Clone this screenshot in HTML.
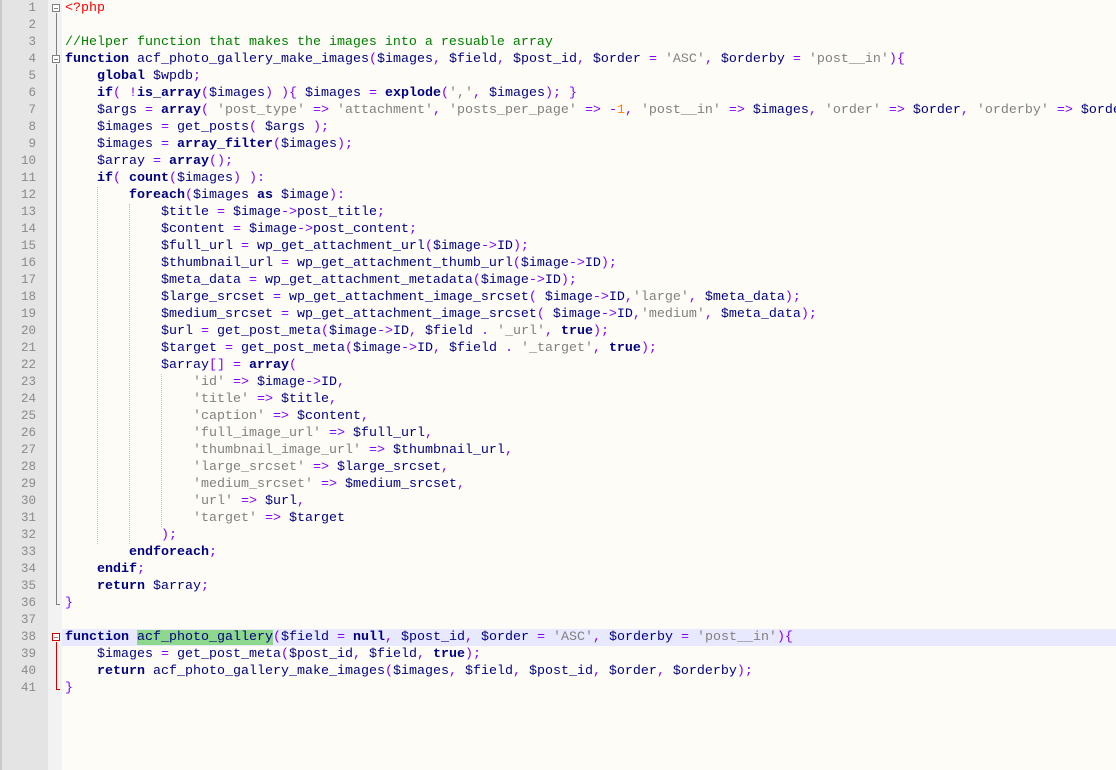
<!DOCTYPE html>
<html><head><meta charset="utf-8"><style>
html,body{margin:0;padding:0;width:1116px;height:770px;overflow:hidden;background:#fefcf6;}
#g{position:absolute;left:0;top:0;width:48px;height:770px;background:#e4e4e4;border-left:2px solid #c8c8c8;box-sizing:border-box;}
#f{position:absolute;left:48px;top:0;width:14px;height:770px;background:#f2f2f2;}
.ln{position:absolute;left:0;width:36px;text-align:right;font:12.5px "Liberation Mono",monospace;color:#8a8a8a;}
#code{position:absolute;left:65px;top:0;font:13.33px/17px "Liberation Mono",monospace;color:#000080;white-space:pre;}
.L{height:17px;}
.hl{position:absolute;left:62px;top:629px;width:1054px;height:17px;background:#e8e8ff;}
.k{font-weight:bold;color:#000080}
.s{color:#808080}
.o{color:#8000ff}
.c{color:#008000}
.h{color:#ff0000}
.m{background:#8ed88e}
.box{position:absolute;left:52px;width:8px;height:8px;border:1px solid #808080;background:#fff;box-sizing:border-box;}
.box:after{content:"";position:absolute;left:1px;top:3px;width:4px;height:1px;background:#808080;}
.vl{position:absolute;left:56px;width:1px;background:#808080;}
.ig{position:absolute;width:0;border-left:1px dotted #c0c0c0;}
</style></head><body>
<div id="g"></div><div id="f"></div>
<div class="hl"></div>
<div id="lns"></div>
<script>
var s='';for(var i=1;i<=41;i++){s+='<div class="ln" style="top:'+((i-1)*17+1)+'px">'+i+'</div>';}
document.getElementById('lns').innerHTML=s;
</script>
<div class="box" style="top:4px"></div>
<div class="vl" style="top:13px;height:47px"></div>
<div class="box" style="top:55px"></div>
<div class="vl" style="top:64px;height:541px"></div>
<div class="vl" style="top:604px;height:1px;width:4px"></div>
<div class="box" style="top:633px;border-color:#d00000"></div>
<div class="vl" style="top:642px;height:48px;background:#d00000"></div>
<div class="vl" style="top:689px;height:1px;width:4px;background:#d00000"></div>
<div class="ig" style="left:97px;top:187px;height:357px"></div>
<div class="ig" style="left:129px;top:204px;height:340px"></div>
<div class="ig" style="left:161px;top:374px;height:153px"></div>
<div id="code"><div class="L"><span class="h">&lt;?php</span></div><div class="L"> </div><div class="L"><span class="c">//Helper function that makes the images into a resuable array</span></div><div class="L"><span class="k">function</span> acf_photo_gallery_make_images<span class="o">(</span>$images<span class="o">,</span> $field<span class="o">,</span> $post_id<span class="o">,</span> $order <span class="o">=</span> <span class="s">'ASC'</span><span class="o">,</span> $orderby <span class="o">=</span> <span class="s">'post__in'</span><span class="o">){</span></div><div class="L">    <span class="k">global</span> $wpdb<span class="o">;</span></div><div class="L">    <span class="k">if</span><span class="o">(</span> <span class="o">!</span><span class="k">is_array</span><span class="o">(</span>$images<span class="o">)</span> <span class="o">){</span> $images <span class="o">=</span> <span class="k">explode</span><span class="o">(</span><span class="s">','</span><span class="o">,</span> $images<span class="o">);</span> <span class="o">}</span></div><div class="L">    $args <span class="o">=</span> <span class="k">array</span><span class="o">(</span> <span class="s">'post_type'</span> <span class="o">=&gt;</span> <span class="s">'attachment'</span><span class="o">,</span> <span class="s">'posts_per_page'</span> <span class="o">=&gt;</span> <span class="o">-</span><span style="color:#ff8000">1</span><span class="o">,</span> <span class="s">'post__in'</span> <span class="o">=&gt;</span> $images<span class="o">,</span> <span class="s">'order'</span> <span class="o">=&gt;</span> $order<span class="o">,</span> <span class="s">'orderby'</span> <span class="o">=&gt;</span> $orderby <span class="o">);</span></div><div class="L">    $images <span class="o">=</span> get_posts<span class="o">(</span> $args <span class="o">);</span></div><div class="L">    $images <span class="o">=</span> <span class="k">array_filter</span><span class="o">(</span>$images<span class="o">);</span></div><div class="L">    $array <span class="o">=</span> <span class="k">array</span><span class="o">();</span></div><div class="L">    <span class="k">if</span><span class="o">(</span> <span class="k">count</span><span class="o">(</span>$images<span class="o">)</span> <span class="o">):</span></div><div class="L">        <span class="k">foreach</span><span class="o">(</span>$images <span class="k">as</span> $image<span class="o">):</span></div><div class="L">            $title <span class="o">=</span> $image<span class="o">-&gt;</span>post_title<span class="o">;</span></div><div class="L">            $content <span class="o">=</span> $image<span class="o">-&gt;</span>post_content<span class="o">;</span></div><div class="L">            $full_url <span class="o">=</span> wp_get_attachment_url<span class="o">(</span>$image<span class="o">-&gt;</span>ID<span class="o">);</span></div><div class="L">            $thumbnail_url <span class="o">=</span> wp_get_attachment_thumb_url<span class="o">(</span>$image<span class="o">-&gt;</span>ID<span class="o">);</span></div><div class="L">            $meta_data <span class="o">=</span> wp_get_attachment_metadata<span class="o">(</span>$image<span class="o">-&gt;</span>ID<span class="o">);</span></div><div class="L">            $large_srcset <span class="o">=</span> wp_get_attachment_image_srcset<span class="o">(</span> $image<span class="o">-&gt;</span>ID<span class="o">,</span><span class="s">'large'</span><span class="o">,</span> $meta_data<span class="o">);</span></div><div class="L">            $medium_srcset <span class="o">=</span> wp_get_attachment_image_srcset<span class="o">(</span> $image<span class="o">-&gt;</span>ID<span class="o">,</span><span class="s">'medium'</span><span class="o">,</span> $meta_data<span class="o">);</span></div><div class="L">            $url <span class="o">=</span> get_post_meta<span class="o">(</span>$image<span class="o">-&gt;</span>ID<span class="o">,</span> $field <span class="o">.</span> <span class="s">'_url'</span><span class="o">,</span> <span class="k">true</span><span class="o">);</span></div><div class="L">            $target <span class="o">=</span> get_post_meta<span class="o">(</span>$image<span class="o">-&gt;</span>ID<span class="o">,</span> $field <span class="o">.</span> <span class="s">'_target'</span><span class="o">,</span> <span class="k">true</span><span class="o">);</span></div><div class="L">            $array<span class="o">[]</span> <span class="o">=</span> <span class="k">array</span><span class="o">(</span></div><div class="L">                <span class="s">'id'</span> <span class="o">=&gt;</span> $image<span class="o">-&gt;</span>ID<span class="o">,</span></div><div class="L">                <span class="s">'title'</span> <span class="o">=&gt;</span> $title<span class="o">,</span></div><div class="L">                <span class="s">'caption'</span> <span class="o">=&gt;</span> $content<span class="o">,</span></div><div class="L">                <span class="s">'full_image_url'</span> <span class="o">=&gt;</span> $full_url<span class="o">,</span></div><div class="L">                <span class="s">'thumbnail_image_url'</span> <span class="o">=&gt;</span> $thumbnail_url<span class="o">,</span></div><div class="L">                <span class="s">'large_srcset'</span> <span class="o">=&gt;</span> $large_srcset<span class="o">,</span></div><div class="L">                <span class="s">'medium_srcset'</span> <span class="o">=&gt;</span> $medium_srcset<span class="o">,</span></div><div class="L">                <span class="s">'url'</span> <span class="o">=&gt;</span> $url<span class="o">,</span></div><div class="L">                <span class="s">'target'</span> <span class="o">=&gt;</span> $target</div><div class="L">            <span class="o">);</span></div><div class="L">        <span class="k">endforeach</span><span class="o">;</span></div><div class="L">    <span class="k">endif</span><span class="o">;</span></div><div class="L">    <span class="k">return</span> $array<span class="o">;</span></div><div class="L"><span class="o">}</span></div><div class="L"> </div><div class="L"><span class="k">function</span> <span class="m">acf_photo_gallery</span><span class="o">(</span>$field <span class="o">=</span> <span class="k">null</span><span class="o">,</span> $post_id<span class="o">,</span> $order <span class="o">=</span> <span class="s">'ASC'</span><span class="o">,</span> $orderby <span class="o">=</span> <span class="s">'post__in'</span><span class="o">){</span></div><div class="L">    $images <span class="o">=</span> get_post_meta<span class="o">(</span>$post_id<span class="o">,</span> $field<span class="o">,</span> <span class="k">true</span><span class="o">);</span></div><div class="L">    <span class="k">return</span> acf_photo_gallery_make_images<span class="o">(</span>$images<span class="o">,</span> $field<span class="o">,</span> $post_id<span class="o">,</span> $order<span class="o">,</span> $orderby<span class="o">);</span></div><div class="L"><span class="o">}</span></div></div>
</body></html>
